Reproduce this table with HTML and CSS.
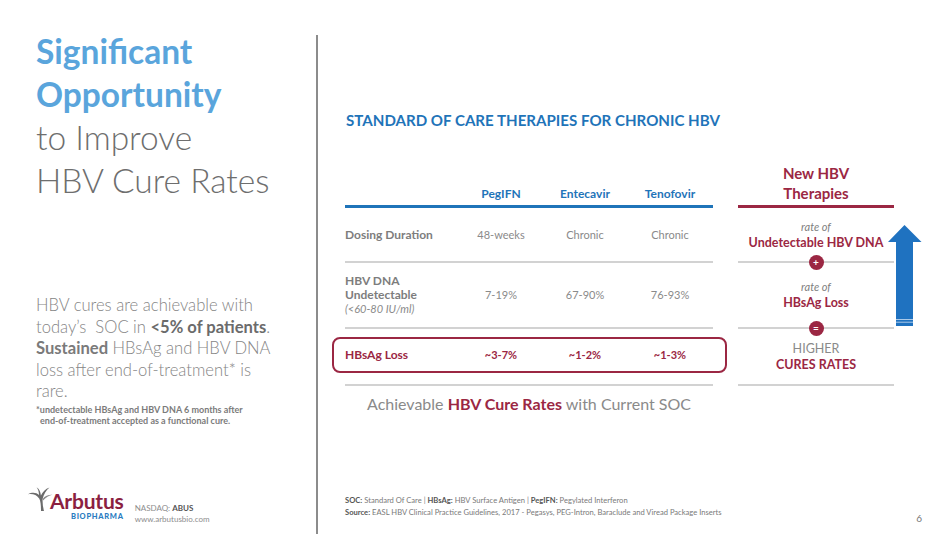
FILE: index.html
```html
<!DOCTYPE html>
<html lang="en">
<head>
<meta charset="utf-8">
<title>Significant Opportunity to Improve HBV Cure Rates</title>
<link rel="stylesheet" href="styles.css">
</head>
<body>
<div class="slide">
  <section class="left">
    <h1 class="title"><span class="accent">Significant<br>Opportunity</span><br>to Improve<br>HBV Cure Rates</h1>
    <p class="lead">HBV cures are achievable with<br>today’s&nbsp; SOC in <b>&lt;5% of patients</b>.<br><b class="soft">Sustained</b> HBsAg and HBV DNA<br>loss after end-of-treatment* is<br>rare.</p>
    <p class="note">*undetectable HBsAg and HBV DNA 6 months after<br><span class="indent">end-of-treatment accepted as a functional cure.</span></p>
    <div class="brand">
      <div class="logo">
        <div class="logo-top">
          <svg class="tree" viewBox="0 0 25 24" aria-hidden="true">
            <path d="M13 24 C13 18 12.6 14 11.2 11.4 C8.5 7.6 4.5 6.4 0 7.2 C4.2 4.8 8.4 5.4 11 8 C11 5 10.2 2.4 8.6 0.2 C11.4 2 12.6 5 12.9 8.6 C14.6 4.8 17.4 1.8 21.5 0.4 C18.2 3.2 15.6 7.2 14.6 12 C14.4 16 14.9 20 16 24 Z" fill="#6b6b6b"/>
            <path d="M14.6 12 C17 9 20.5 7.6 24.5 7.8 C21 8.6 17.8 10.4 15 13.6 Z" fill="#8a8a8a"/>
          </svg>
          <span class="wordmark">Arbutus</span>
        </div>
        <div class="bio">BIOPHARMA</div>
      </div>
      <div class="ticker">
        <div>NASDAQ: <b>ABUS</b></div>
        <div>www.arbutusbio.com</div>
      </div>
    </div>
  </section>

  <section class="main">
    <h2 class="heading">STANDARD OF CARE THERAPIES FOR CHRONIC HBV</h2>
    <div class="compare">
      <div class="soc">
        <div class="row head"><span></span><span>PegIFN</span><span>Entecavir</span><span>Tenofovir</span></div>
        <div class="row r1"><span class="lbl">Dosing Duration</span><span>48-weeks</span><span>Chronic</span><span>Chronic</span></div>
        <div class="row r2"><span class="lbl">HBV DNA<br>Undetectable<br><i>(&lt;60-80 IU/ml)</i></span><span>7-19%</span><span>67-90%</span><span>76-93%</span></div>
        <div class="r3">
          <div class="hl"><span class="lbl">HBsAg Loss</span><span>~3-7%</span><span>~1-2%</span><span>~1-3%</span></div>
        </div>
        <p class="achieve">Achievable <b>HBV Cure Rates</b> with Current SOC</p>
      </div>

      <div class="newt">
        <div class="nhead">New HBV<br>Therapies</div>
        <div class="blk b1"><i>rate of</i><b>Undetectable HBV DNA</b><span class="op">+</span></div>
        <div class="blk b2"><i>rate of</i><b>HBsAg Loss</b><span class="op">=</span></div>
        <div class="blk b3"><span class="higher">HIGHER</span><b>CURES RATES</b></div>
      </div>

      <svg class="arrow" viewBox="0 0 34 101" aria-hidden="true">
        <polygon points="16.5,0 33.5,17 25,17 25,101 8,101 8,17 0,17" fill="#1f72c0"/>
        <line x1="8" y1="94.5" x2="25" y2="94.5" stroke="#cfe0f2" stroke-width="0.8"/>
        <line x1="8" y1="97.2" x2="25" y2="97.2" stroke="#cfe0f2" stroke-width="0.8"/>
      </svg>
    </div>

    <footer class="foot">
      <div class="refs">
        <div><b>SOC:</b> Standard Of Care | <b>HBsAg:</b> HBV Surface Antigen | <b>PegIFN:</b> Pegylated Interferon</div>
        <div><b>Source:</b> EASL HBV Clinical Practice Guidelines, 2017 - Pegasys, PEG-Intron, Baraclude and Viread Package Inserts</div>
      </div>
      <span class="pg">6</span>
    </footer>
  </section>
</div>
</body>
</html>
```

FILE: styles.css
```css
html, body {
  margin: 0;
  background: #ffffff;
}

body {
  font-family: Lato, "Open Sans", "DejaVu Sans", sans-serif;
}

.slide {
  width: 950px;
  height: 534px;
  display: flex;
  overflow: hidden;
  background: #ffffff;
}

/* ---------- left column ---------- */
.left {
  width: 316px;
  flex: none;
  box-sizing: border-box;
  padding: 30px 0 9px 36px;
  display: flex;
  flex-direction: column;
}

.title {
  margin: 0;
  font-size: 33.5px;
  line-height: 43px;
  font-weight: 300;
  color: #6e6e6e;
}

.accent {
  font-weight: 700;
  color: #5aa5dc;
}

.lead {
  margin: 93px 0 0;
  font-size: 16.6px;
  line-height: 21.5px;
  font-weight: 300;
  color: #858585;
  white-space: nowrap;
}

.lead b {
  font-weight: 700;
  color: #6b6b6b;
}

.lead b.soft {
  color: #7a7a7a;
}

.note {
  margin: 1px 0 0;
  font-size: 9px;
  line-height: 11.5px;
  font-weight: 700;
  color: #7b7b7b;
  white-space: nowrap;
}

.indent {
  padding-left: 4px;
}

.brand {
  margin-top: auto;
  margin-left: -8px;
  display: flex;
  align-items: flex-end;
  gap: 11px;
}

.logo {
  margin-bottom: 4px;
}

.logo-top {
  display: flex;
  align-items: flex-end;
}

.tree {
  width: 25px;
  height: 24px;
  display: block;
}

.wordmark {
  margin-left: -3px;
  font-size: 21px;
  line-height: 20px;
  font-weight: 700;
  color: #8b1f41;
  letter-spacing: -0.2px;
}

.bio {
  margin-top: 1px;
  font-size: 7.5px;
  line-height: 9px;
  font-weight: 900;
  color: #2a7cc1;
  letter-spacing: 0.7px;
  text-align: right;
}

.ticker {
  font-size: 8px;
  line-height: 11px;
  color: #8d8d8d;
}

.ticker b {
  color: #555555;
  font-weight: 700;
}

/* ---------- main ---------- */
.main {
  flex: 1;
  margin-top: 35px;
  height: 499px;
  box-sizing: border-box;
  border-left: 2px solid #8c8c8c;
  padding: 76px 40px 9px 27px;
  display: flex;
  flex-direction: column;
}

.heading {
  margin: 0 0 0 1px;
  font-size: 15.1px;
  line-height: 18px;
  font-weight: 700;
  color: #1f74b9;
}

.compare {
  margin-top: 31px;
  display: flex;
  align-items: flex-start;
}

.soc {
  width: 368px;
  flex: none;
}

.row,
.hl {
  display: grid;
  grid-template-columns: 114px 84px 84px 86px;
  align-items: center;
  font-size: 11px;
  line-height: 14px;
  color: #8a8a8a;
}

.row span,
.hl span {
  text-align: center;
}

.row .lbl,
.hl .lbl {
  text-align: left;
  font-size: 12px;
  font-weight: 700;
  color: #7d7d7d;
}

.lbl i {
  font-weight: 400;
  font-size: 11px;
  color: #8a8a8a;
}

.head {
  height: 42px;
  padding-bottom: 3px;
  border-bottom: 3px solid #1f74b9;
  align-items: end;
  font-size: 12px;
  line-height: 16px;
  font-weight: 700;
  color: #1f74b9;
}

.r1 {
  height: 53px;
  border-bottom: 2px solid #d2d2d2;
}

.r2 {
  height: 64px;
  border-bottom: 2px solid #d2d2d2;
}

.r3 {
  height: 47px;
  padding-top: 8px;
  border-bottom: 2px solid #d2d2d2;
}

.hl {
  box-sizing: border-box;
  height: 36px;
  margin: 0 -14px 0 -13px;
  padding: 0 12px 0 11px;
  border: 2px solid #9b2743;
  border-radius: 8px;
  font-weight: 700;
  color: #9b2743;
}

.hl .lbl {
  color: #9b2743;
}

.achieve {
  margin: 8px 0 0;
  text-align: center;
  font-size: 16px;
  line-height: 20px;
  color: #8a8a8a;
}

.achieve b {
  color: #9b2743;
}

.newt {
  width: 156px;
  flex: none;
  margin-left: 25px;
}

.nhead {
  box-sizing: border-box;
  height: 48px;
  padding-top: 3px;
  border-bottom: 3px solid #9b2743;
  text-align: center;
  font-size: 15px;
  line-height: 20px;
  font-weight: 700;
  color: #9b2743;
}

.blk {
  position: relative;
  display: flex;
  flex-direction: column;
  justify-content: center;
  align-items: center;
  border-bottom: 2px solid #d2d2d2;
  text-align: center;
  line-height: 16px;
}

.b1 { height: 53px; }
.b2 { height: 64px; }
.b3 { height: 55px; }

.blk i {
  font-size: 11px;
  color: #7f7f7f;
}

.blk b {
  font-size: 12.5px;
  color: #9b2743;
}

.higher {
  font-size: 12.5px;
  color: #8a8a8a;
}

.op {
  position: absolute;
  left: 50%;
  bottom: -8.5px;
  width: 15px;
  height: 15px;
  margin-left: -7.5px;
  border-radius: 50%;
  background: #9b2743;
  color: #ffffff;
  font-size: 10px;
  font-weight: 700;
  line-height: 15px;
  text-align: center;
}

.arrow {
  flex: none;
  width: 34px;
  height: 101px;
  margin-left: -6px;
  margin-top: 65px;
}

/* ---------- footer ---------- */
.foot {
  margin-top: auto;
  display: flex;
  align-items: flex-end;
  font-size: 7.6px;
  line-height: 12px;
  color: #7a7a7a;
}

.refs {
  padding-bottom: 7px;
}

.foot b {
  color: #555555;
  font-weight: 700;
}

.pg {
  margin-left: auto;
  font-size: 10px;
  line-height: 14px;
  color: #777777;
}
```
